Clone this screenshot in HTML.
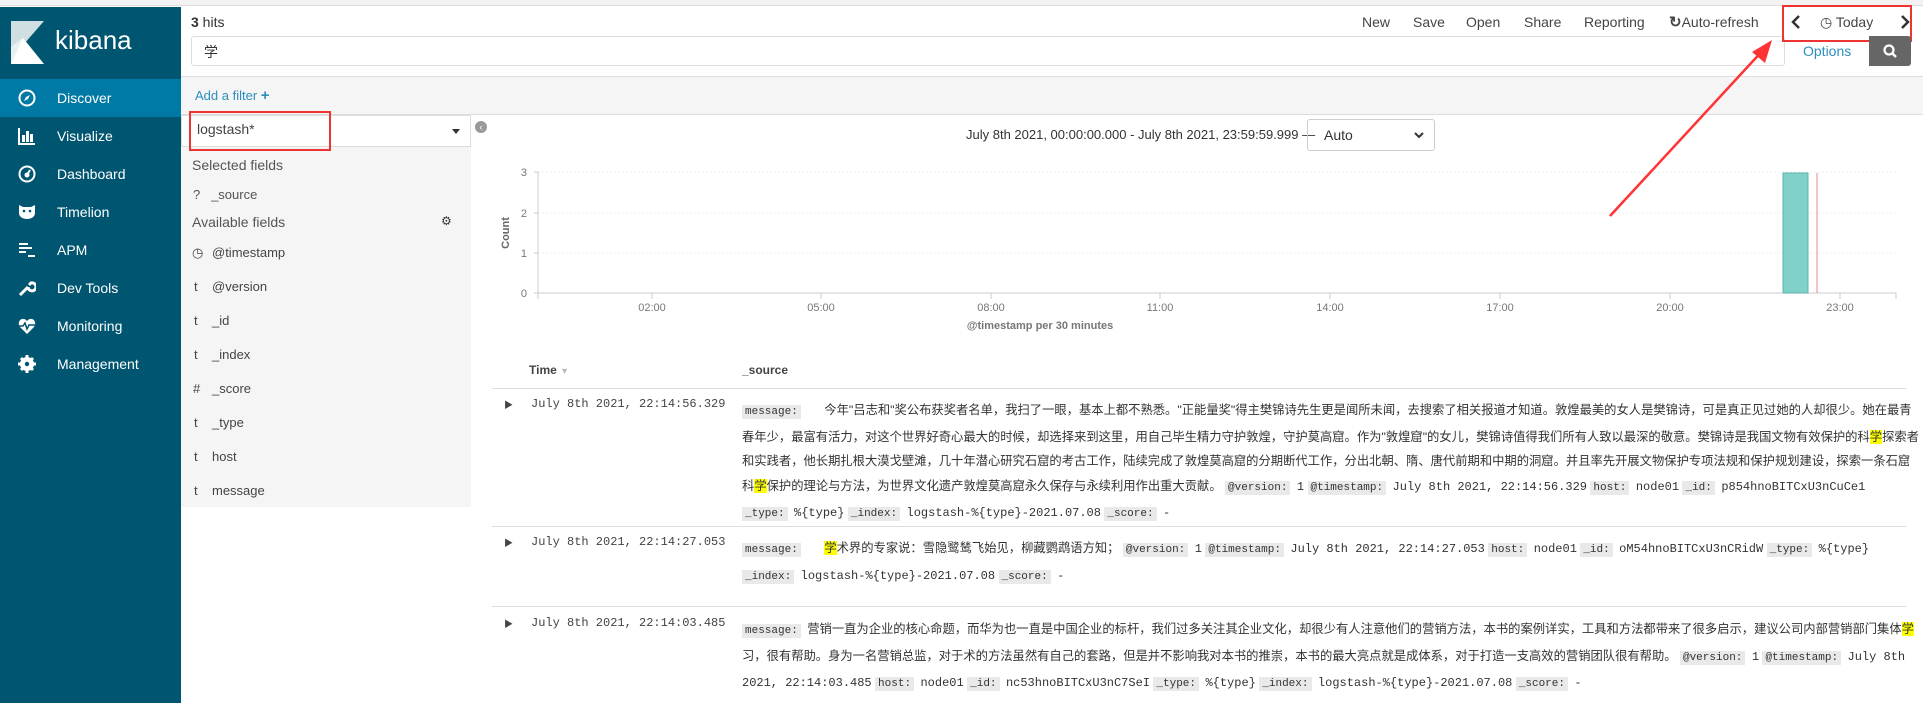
<!DOCTYPE html>
<html><head><meta charset="utf-8"><style>
*{box-sizing:border-box;margin:0;padding:0}
body{width:1923px;height:703px;overflow:hidden;background:#fff;font-family:"Liberation Sans","Noto Sans CJK SC",sans-serif;color:#333;position:relative}
.abs{position:absolute}
#top{left:0;top:0;width:1923px;height:6px;background:#f2f2f2;border-bottom:1px solid #ddd}
#side{left:0;top:7px;width:181px;height:696px;background:#005571}
.nav{position:absolute;left:0;width:181px;height:38px;color:#fff;font-size:14px;line-height:38px}
.nav span{position:absolute;left:57px}
.nav svg{position:absolute;left:18px;top:10px}
.t{font-size:13px;color:#444;position:absolute;white-space:nowrap}
.mono{font-family:"Liberation Mono",monospace}
.lbl{background:#e9e9e9;font-family:"Liberation Mono",monospace;font-size:11px;padding:1px 3px;color:#333;margin-right:3px}
.hl{background:#ff0}
.src{position:absolute;left:742px;width:1178px;font-size:12.3px;line-height:24.5px;color:#333}
.src .m{font-family:"Liberation Mono",monospace;font-size:12px}
.row{position:absolute;left:492px;width:1414px;border-top:1px solid #ddd}
</style></head><body>
<div id="top" class="abs"></div>
<div id="side" class="abs">
  <svg class="abs" style="left:11px;top:14px" width="33" height="43" viewBox="0 0 33 43"><polygon points="0,0 33,0 0,38" fill="#cfdfe2"/><polygon points="0,43 0,26 12,17 33,43" fill="#fff"/><polygon points="12,17 0,26 0,43" fill="#e8f0f1"/></svg>
  <div class="abs" style="left:55px;top:18px;color:#fff;font-size:26px">kibana</div>
  <div class="nav" style="top:72px;background:#0079a5"><svg width="18" height="18" viewBox="0 0 18 18"><circle cx="9" cy="9" r="7.5" fill="none" stroke="#fff" stroke-width="2"/><polygon points="12,6 10,10 6,12 8,8" fill="#fff"/></svg><span>Discover</span></div>
  <div class="nav" style="top:110px"><svg width="18" height="18" viewBox="0 0 18 18"><path d="M1 1V17H17" stroke="#fff" stroke-width="2" fill="none"/><rect x="4" y="8" width="3" height="7" fill="#fff"/><rect x="8" y="4" width="3" height="11" fill="#fff"/><rect x="12" y="7" width="3" height="8" fill="#fff"/></svg><span>Visualize</span></div>
  <div class="nav" style="top:148px"><svg width="18" height="18" viewBox="0 0 18 18"><circle cx="9" cy="9" r="7.5" fill="none" stroke="#fff" stroke-width="2"/><circle cx="9" cy="10" r="2.5" fill="#fff"/><path d="M9 10L12 5" stroke="#fff" stroke-width="2"/></svg><span>Dashboard</span></div>
  <div class="nav" style="top:186px"><svg width="18" height="18" viewBox="0 0 18 18"><path d="M1 2L5 4H13L17 2V10C17 14 13 16 9 16C5 16 1 14 1 10Z" fill="#fff"/><circle cx="6" cy="8" r="1.3" fill="#005571"/><circle cx="12" cy="8" r="1.3" fill="#005571"/></svg><span>Timelion</span></div>
  <div class="nav" style="top:224px"><svg width="18" height="18" viewBox="0 0 18 18"><path d="M1 3H10M1 7H14M1 11H8M10 15H17" stroke="#fff" stroke-width="2"/></svg><span>APM</span></div>
  <div class="nav" style="top:262px"><svg width="18" height="18" viewBox="0 0 18 18"><path d="M2 16L10 8M10 8A4 4 0 1 0 13 4L11 6" stroke="#fff" stroke-width="3" fill="none"/></svg><span>Dev Tools</span></div>
  <div class="nav" style="top:300px"><svg width="18" height="18" viewBox="0 0 18 18"><path d="M9 17L2 10C-1 6 2 1 6 2C7 2 8 3 9 4C10 3 11 2 12 2C16 1 19 6 16 10Z" fill="#fff"/><path d="M1 9H5L7 6L9 12L11 8H17" stroke="#005571" stroke-width="1.5" fill="none"/></svg><span>Monitoring</span></div>
  <div class="nav" style="top:338px"><svg width="18" height="18" viewBox="0 0 18 18"><circle cx="9" cy="9" r="5" fill="none" stroke="#fff" stroke-width="4"/><path d="M9 0V18M0 9H18M3 3L15 15M15 3L3 15" stroke="#fff" stroke-width="3"/><circle cx="9" cy="9" r="2.2" fill="#005571"/></svg><span>Management</span></div>
</div>

<div class="abs" style="left:191px;top:14px;font-size:14px;color:#333"><b>3</b> hits</div>
<div class="abs" style="left:191px;top:36px;width:1594px;height:30px;border:1px solid #ddd;border-radius:3px"></div>
<div class="abs" style="left:204px;top:42px;font-size:14px;font-family:'Noto Sans CJK SC',sans-serif;color:#333">学</div>
<div class="t" style="left:1362px;top:14px;font-size:14px">New</div>
<div class="t" style="left:1413px;top:14px;font-size:14px">Save</div>
<div class="t" style="left:1466px;top:14px;font-size:14px">Open</div>
<div class="t" style="left:1524px;top:14px;font-size:14px">Share</div>
<div class="t" style="left:1584px;top:14px;font-size:14px">Reporting</div>
<div class="t" style="left:1669px;top:13px;font-size:14px"><b style="font-size:15px">&#8635;</b>Auto-refresh</div>
<svg class="abs" style="left:1790px;top:14px" width="12" height="16"><path d="M9 2L3 8L9 14" stroke="#333" stroke-width="2.5" fill="none"/></svg>
<div class="t" style="left:1820px;top:14px;font-size:14px">&#9719; Today</div>
<svg class="abs" style="left:1899px;top:14px" width="12" height="16"><path d="M3 2L9 8L3 14" stroke="#333" stroke-width="2.5" fill="none"/></svg>
<div class="abs" style="left:1782px;top:5px;width:130px;height:37px;border:2px solid #e33"></div>
<div class="t" style="left:1803px;top:43px;font-size:14px;color:#2d8fc1">Options</div>
<div class="abs" style="left:1869px;top:36px;width:42px;height:30px;background:#666;border-radius:0 3px 3px 0"><svg width="42" height="30" viewBox="0 0 42 30"><circle cx="20" cy="14" r="4.5" fill="none" stroke="#fff" stroke-width="2.2"/><path d="M23 17L27 21" stroke="#fff" stroke-width="2.5"/></svg></div>

<div class="abs" style="left:181px;top:76px;width:1742px;height:39px;background:#f5f5f5;border-top:1px solid #ddd;border-bottom:1px solid #ddd"></div>
<div class="t" style="left:195px;top:87px;color:#2d8fc1">Add a filter <b style="font-size:15px">+</b></div>
<div class="abs" style="left:181px;top:115px;width:290px;height:392px;background:#f5f5f5"></div>
<div class="abs" style="left:181px;top:115px;width:290px;height:32px;background:#fff;border:1px solid #ddd"></div>
<div class="t" style="left:197px;top:121px;font-size:14px">logstash*</div>
<div class="abs" style="left:452px;top:129px;border:4px solid transparent;border-top:5px solid #333"></div>
<div class="abs" style="left:189px;top:111px;width:142px;height:40px;border:2px solid #e33"></div>
<div class="abs" style="left:475px;top:121px;width:12px;height:12px;border-radius:6px;background:#999;color:#fff;font-size:9px;line-height:12px;text-align:center">&#8249;</div>
<div class="t" style="left:192px;top:157px;font-size:14px;color:#555">Selected fields</div>
<div class="t" style="left:193px;top:187px;color:#555">?&nbsp;&nbsp;&nbsp;_source</div>
<div class="t" style="left:192px;top:214px;font-size:14px;color:#555">Available fields</div>
<div class="t" style="left:441px;top:214px;font-size:12px;color:#333">&#9881;</div>
<div class="t" style="left:192px;top:245px"><span style="display:inline-block;width:20px">&#9719;</span>@timestamp</div>
<div class="t" style="left:194px;top:279px"><span style="display:inline-block;width:18px">t</span>@version</div>
<div class="t" style="left:194px;top:313px"><span style="display:inline-block;width:18px">t</span>_id</div>
<div class="t" style="left:194px;top:347px"><span style="display:inline-block;width:18px">t</span>_index</div>
<div class="t" style="left:193px;top:381px"><span style="display:inline-block;width:19px">#</span>_score</div>
<div class="t" style="left:194px;top:415px"><span style="display:inline-block;width:18px">t</span>_type</div>
<div class="t" style="left:194px;top:449px"><span style="display:inline-block;width:18px">t</span>host</div>
<div class="t" style="left:194px;top:483px"><span style="display:inline-block;width:18px">t</span>message</div>

<div class="t" style="left:966px;top:127px;font-size:13px;color:#333">July 8th 2021, 00:00:00.000 - July 8th 2021, 23:59:59.999 —</div>
<div class="abs" style="left:1307px;top:119px;width:128px;height:32px;border:1px solid #ccc;border-radius:3px;font-size:14px;line-height:30px;padding-left:16px;color:#333">Auto<svg style="position:absolute;right:10px;top:12px" width="10" height="7"><path d="M1 1L5 5L9 1" stroke="#333" stroke-width="2" fill="none"/></svg></div>

<svg class="abs" style="left:490px;top:160px" width="1420" height="175">
  <g stroke="#eee" stroke-dasharray="2,2"><line x1="48" y1="12" x2="1406" y2="12"/><line x1="48" y1="53" x2="1406" y2="53"/><line x1="48" y1="93" x2="1406" y2="93"/></g>
  <path d="M48 12V139M44 12H48M44 53H48M44 93H48M44 133H48M48 133H1406V139" stroke="#ccc" fill="none"/>
  <g stroke="#ccc"><line x1="162" y1="133" x2="162" y2="139"/><line x1="331" y1="133" x2="331" y2="139"/><line x1="501" y1="133" x2="501" y2="139"/><line x1="670" y1="133" x2="670" y2="139"/><line x1="840" y1="133" x2="840" y2="139"/><line x1="1010" y1="133" x2="1010" y2="139"/><line x1="1180" y1="133" x2="1180" y2="139"/><line x1="1350" y1="133" x2="1350" y2="139"/></g>
  <rect x="1293" y="13" width="25" height="120" fill="#80d1c8" stroke="#5ab5ab"/>
  <line x1="1327" y1="13" x2="1327" y2="133" stroke="#e88"/>
  <g font-family="Liberation Sans" font-size="11" fill="#777"><text x="37" y="16" text-anchor="end">3</text><text x="37" y="57" text-anchor="end">2</text><text x="37" y="97" text-anchor="end">1</text><text x="37" y="137" text-anchor="end">0</text>
  <g text-anchor="middle"><text x="162" y="151">02:00</text><text x="331" y="151">05:00</text><text x="501" y="151">08:00</text><text x="670" y="151">11:00</text><text x="840" y="151">14:00</text><text x="1010" y="151">17:00</text><text x="1180" y="151">20:00</text><text x="1350" y="151">23:00</text></g></g>
  <text x="0" y="0" transform="translate(19,73) rotate(-90)" text-anchor="middle" font-family="Liberation Sans" font-size="11" font-weight="bold" fill="#666">Count</text>
  <text x="550" y="169" text-anchor="middle" font-family="Liberation Sans" font-size="11" font-weight="bold" fill="#777">@timestamp per 30 minutes</text>
</svg>
<svg class="abs" style="left:1600px;top:30px" width="190" height="200"><line x1="10" y1="186" x2="165" y2="18" stroke="#f33" stroke-width="2.5"/><polygon points="172,10 152,22 165,33" fill="#f33"/></svg>

<div class="t" style="left:529px;top:363px;font-size:12px;font-weight:bold">Time <span style="color:#bbb;font-size:9px">&#9660;</span></div>
<div class="t" style="left:742px;top:363px;font-size:12px;font-weight:bold">_source</div>
<div class="row" style="top:388px"></div>
<div class="t" style="left:504px;top:398px;font-size:9px">&#9654;</div>
<div class="t mono" style="left:531px;top:397px;font-size:12px">July 8th 2021, 22:14:56.329</div>
<div class="src" style="top:398px"><span class="lbl">message:</span> &nbsp;&nbsp;&nbsp;&nbsp;&nbsp;今年"吕志和"奖公布获奖者名单，我扫了一眼，基本上都不熟悉。"正能量奖"得主樊锦诗先生更是闻所未闻，去搜索了相关报道才知道。敦煌最美的女人是樊锦诗，可是真正见过她的人却很少。她在最青春年少，最富有活力，对这个世界好奇心最大的时候，却选择来到这里，用自己毕生精力守护敦煌，守护莫高窟。作为"敦煌窟"的女儿，樊锦诗值得我们所有人致以最深的敬意。樊锦诗是我国文物有效保护的科<span class="hl">学</span>探索者和实践者，他长期扎根大漠戈壁滩，几十年潜心研究石窟的考古工作，陆续完成了敦煌莫高窟的分期断代工作，分出北朝、隋、唐代前期和中期的洞窟。并且率先开展文物保护专项法规和保护规划建设，探索一条石窟科<span class="hl">学</span>保护的理论与方法，为世界文化遗产敦煌莫高窟永久保存与永续利用作出重大贡献。 <span class="lbl">@version:</span> <span class="m">1</span> <span class="lbl">@timestamp:</span> <span class="m">July 8th 2021, 22:14:56.329</span> <span class="lbl">host:</span> <span class="m">node01</span> <span class="lbl">_id:</span> <span class="m">p854hnoBITCxU3nCuCe1</span><br><span class="lbl">_type:</span> <span class="m">%{type}</span> <span class="lbl">_index:</span> <span class="m">logstash-%{type}-2021.07.08</span> <span class="lbl">_score:</span> <span class="m">-</span></div>
<div class="row" style="top:526px"></div>
<div class="t" style="left:504px;top:536px;font-size:9px">&#9654;</div>
<div class="t mono" style="left:531px;top:535px;font-size:12px">July 8th 2021, 22:14:27.053</div>
<div class="src" style="top:536px"><span class="lbl">message:</span> &nbsp;&nbsp;&nbsp;&nbsp;&nbsp;<span class="hl">学</span>术界的专家说：雪隐鹭鸶飞始见，柳藏鹦鹉语方知； <span class="lbl">@version:</span> <span class="m">1</span> <span class="lbl">@timestamp:</span> <span class="m">July 8th 2021, 22:14:27.053</span> <span class="lbl">host:</span> <span class="m">node01</span> <span class="lbl">_id:</span> <span class="m">oM54hnoBITCxU3nCRidW</span> <span class="lbl">_type:</span> <span class="m">%{type}</span> <span class="lbl">_index:</span> <span class="m">logstash-%{type}-2021.07.08</span> <span class="lbl">_score:</span> <span class="m">-</span></div>
<div class="row" style="top:606px"></div>
<div class="t" style="left:504px;top:617px;font-size:9px">&#9654;</div>
<div class="t mono" style="left:531px;top:616px;font-size:12px">July 8th 2021, 22:14:03.485</div>
<div class="src" style="top:617px"><span class="lbl">message:</span> 营销一直为企业的核心命题，而华为也一直是中国企业的标杆，我们过多关注其企业文化，却很少有人注意他们的营销方法，本书的案例详实，工具和方法都带来了很多启示，建议公司内部营销部门集体<span class="hl">学</span>习，很有帮助。身为一名营销总监，对于术的方法虽然有自己的套路，但是并不影响我对本书的推崇，本书的最大亮点就是成体系，对于打造一支高效的营销团队很有帮助。 <span class="lbl">@version:</span> <span class="m">1</span> <span class="lbl">@timestamp:</span> <span class="m">July 8th 2021, 22:14:03.485</span> <span class="lbl">host:</span> <span class="m">node01</span> <span class="lbl">_id:</span> <span class="m">nc53hnoBITCxU3nC7SeI</span> <span class="lbl">_type:</span> <span class="m">%{type}</span> <span class="lbl">_index:</span> <span class="m">logstash-%{type}-2021.07.08</span> <span class="lbl">_score:</span> <span class="m">-</span></div>
</body></html>
